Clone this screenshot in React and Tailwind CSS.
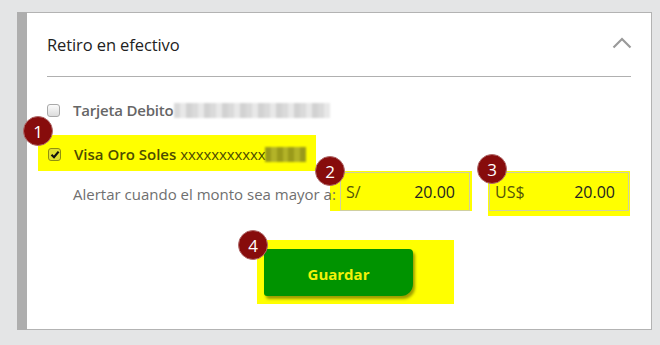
import React from 'react'

const font = { fontFamily: '"Open Sans", sans-serif' }

function Badge({ n, className }) {
    return (
        <div
            className={
                'absolute z-20 w-[30px] h-[30px] rounded-full bg-[#870c0c] border border-[#b06a6a] flex items-center justify-center text-white text-[17px] leading-none ' +
                className
            }
        >
            {n}
        </div>
    )
}

function Check() {
    return (
        <div className="w-[13px] h-[13px] rounded-[3px] border border-[#a9a9a9] bg-gradient-to-b from-[#fbfbfb] to-[#dcdcdc] shrink-0" />
    )
}

function Blur({ w, light }) {
    // pixelated blurred account digits
    const cells = Array.from({ length: Math.round(w / 6) })
    return (
        <div className="flex h-[15px] blur-[1px]" style={{ width: w }}>
            {cells.map((_, i) => (
                <div
                    key={i}
                    className={
                        'w-[6px] h-full ' +
                        (light
                            ? i % 3 === 0
                                ? 'bg-[#dadada]'
                                : i % 3 === 1
                                  ? 'bg-[#e8e8e8]'
                                  : 'bg-[#d2d2d2]'
                            : i % 2 === 0
                              ? 'bg-[#9a9a1a]'
                              : 'bg-[#b3b328]')
                    }
                />
            ))}
        </div>
    )
}

export default function App() {
    return (
        <div className="w-[660px] h-[345px] bg-[#e4e5e6] pt-[12px] pl-[17px] pr-[8px] overflow-hidden" style={font}>
            <div className="flex h-[318px]">
                <div className="w-[10px] bg-[#aeaeae] shrink-0" />
                <div className="flex-1 bg-white border-t border-r border-b border-[#b3b3b3] pl-[20px] pr-[20px]">
                    <div className="h-[64px] flex items-center justify-between border-b border-[#b0b0b0]">
                        <span className="text-[16.5px] text-[#222] tracking-[-0.1px] mt-[1px]">Retiro en efectivo</span>
                        <svg width="20" height="12" viewBox="0 0 20 12" className="mr-[-1px] mb-[3px]">
                            <path d="M1.5 10.5 L10 2 L18.5 10.5" fill="none" stroke="#9a9a9a" strokeWidth="2.2" />
                        </svg>
                    </div>

                    <div className="mt-[23px] h-[20px] flex items-center">
                        <Check />
                        <span className="ml-[13px] text-[15px] font-semibold text-[#666] tracking-[-0.2px]">Tarjeta Debito</span>
                        <div className="ml-[1px]">
                            <Blur w={156} light />
                        </div>
                    </div>

                    <div className="relative mt-[15px] ml-[-9px] w-[278px] h-[36px] bg-[#ffff00] flex items-center pl-[10px]">
                        <Badge n="1" className="left-[-15px] top-[-19px]" />
                        <div className="w-[13px] h-[13px] rounded-[3px] border border-[#8f8f10] bg-[#e0e030] flex items-center justify-center mt-[2px]">
                            <svg width="10" height="9" viewBox="0 0 10 9">
                                <path d="M1.5 4.8 L4 7.2 L8.6 1.6" fill="none" stroke="#111" strokeWidth="2.2" />
                            </svg>
                        </div>
                        <span className="ml-[13px] mt-[2px] text-[15px] font-semibold text-[#4d4d00] whitespace-nowrap">
                            Visa Oro Soles <span className="font-normal tracking-[-0.1px]">xxxxxxxxxxx</span>
                        </span>
                        <div className="mt-[2px]">
                            <Blur w={40} />
                        </div>
                    </div>

                    <div className="flex items-start">
                        <div className="relative z-10 w-[283px] pl-[26px] pt-[12px] text-[15px] text-[#6f6f6f] whitespace-nowrap">
                            Alertar cuando el monto sea mayor a:
                        </div>
                        <div className="relative bg-[#ffff00] w-[142px] h-[40px] pl-[10px] pr-[2px] pt-[1px]">
                            <Badge n="2" className="left-[-15px] top-[-15px]" />
                            <div className="h-[39px] border border-[#cfcfa0] flex items-center justify-between pl-[5px] pr-[14px] text-[16px]">
                                <span className="text-[#55550a]">S/</span>
                                <span className="text-[#222]">20.00</span>
                            </div>
                        </div>
                        <div className="relative ml-[16px] bg-[#ffff00] w-[142px] h-[45px] px-[1px] pt-[1px]">
                            <Badge n="3" className="left-[-11px] top-[-17px]" />
                            <div className="h-[39px] border border-[#cfcfa0] flex items-center justify-between pl-[5px] pr-[13px] text-[16px]">
                                <span className="text-[#55550a]">US$</span>
                                <span className="text-[#222]">20.00</span>
                            </div>
                        </div>
                    </div>

                    <div className="relative mt-[24px] ml-[210px] w-[197px] h-[64px] bg-[#ffff00] pl-[7px] pt-[9px]">
                        <Badge n="4" className="left-[-19px] top-[-10px]" />
                        <button className="w-[149px] h-[47px] bg-[#009300] rounded-tl-[3px] rounded-tr-[4px] rounded-bl-[3px] rounded-br-[12px] shadow-[2px_3px_3px_rgba(90,90,0,0.6)] text-[#f2f20a] font-bold text-[15px] pt-[4px]">
                            Guardar
                        </button>
                    </div>
                </div>
            </div>
        </div>
    )
}
